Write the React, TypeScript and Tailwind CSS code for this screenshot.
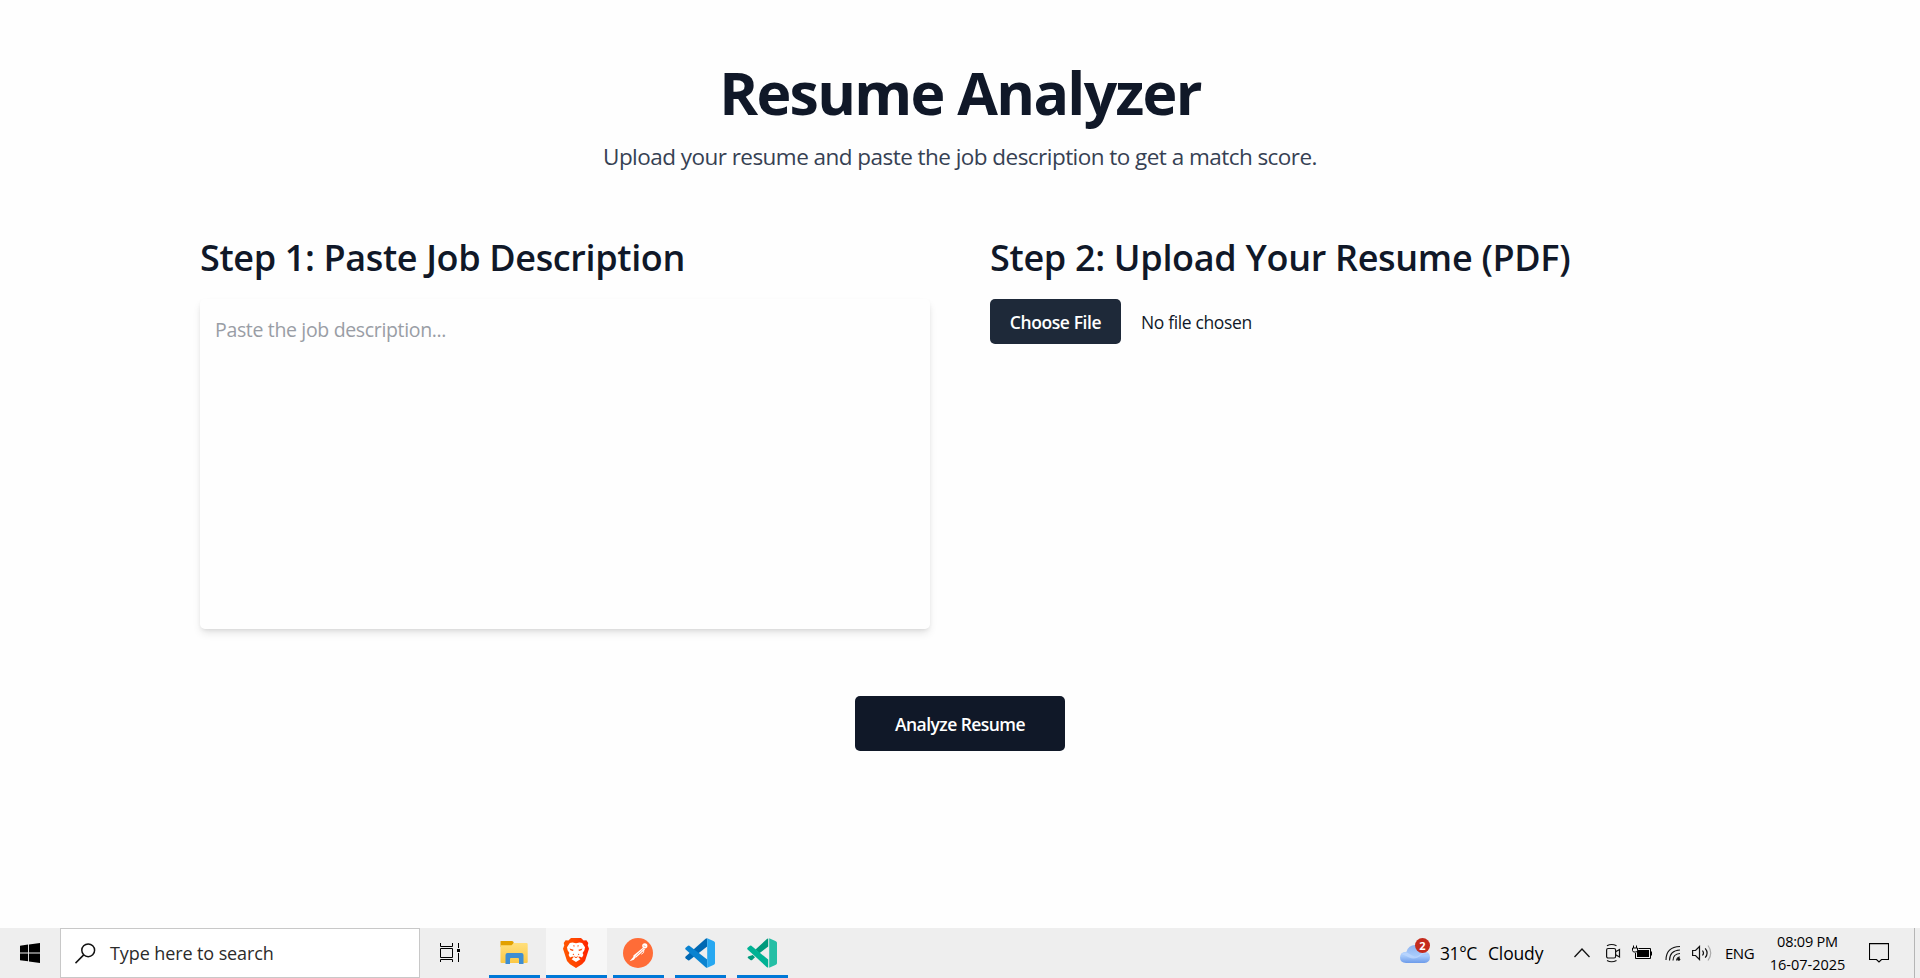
import type { ReactNode } from 'react';

function StartIcon() {
  return (
    <svg className="h-5 w-5" viewBox="0 0 20 20" fill="#000">
      <path d="M0 2.8 8.1 1.6V9.4H0zM9 1.5 20 0V9.4H9zM0 10.4H8.1V18.3L0 17.2zM9 10.4H20V20L9 18.5z" />
    </svg>
  );
}

function SearchIcon() {
  return (
    <svg className="h-[21px] w-[21px]" viewBox="0 0 21 21" fill="none" stroke="#111" strokeWidth="1.5">
      <circle cx="13.2" cy="7.3" r="6.4" />
      <path d="M8.7 11.9.5 20.1" />
    </svg>
  );
}

function TaskViewIcon() {
  return (
    <svg className="h-5 w-5" viewBox="0 0 20 20" fill="none" stroke="#000" strokeWidth="1">
      <path d="M.5 0V3.5H12.5V0M.5 5.5H12.5V14.5H.5zM.5 19V16.5H12.5V19M18.5 0V5M18.5 10V19" />
      <rect x="17" y="6" width="3" height="3" fill="#000" stroke="none" />
    </svg>
  );
}

function FolderIcon() {
  return (
    <svg className="h-[30px] w-[30px]" viewBox="0 0 30 30">
      <defs>
        <linearGradient id="folder" x1="0" y1="0" x2="0" y2="1">
          <stop offset="0" stopColor="#ffdf7c" />
          <stop offset="1" stopColor="#fbc845" />
        </linearGradient>
      </defs>
      <path d="M1.5 3.6Q1.5 3 2.2 3H13Q14.6 3 14.6 4.6V9H1.5z" fill="#e2a100" />
      <path d="M1.500 7.300H12.500L14.800 5H27.600Q28.700 5 28.700 6.200V24Q28.700 25 27.600 25H2.600Q1.500 25 1.500 24z" fill="url(#folder)" />
      <path d="M6.500 26V17Q6.500 15 8.500 15H22.500Q24.500 15 24.500 17V26H20V21Q20 20 19 20H12Q11 20 11 21V26z" fill="#3d8ed3" />
    </svg>
  );
}

function BraveIcon() {
  return (
    <svg className="h-[30px] w-[30px]" viewBox="0 0 30 30">
      <defs>
        <linearGradient id="brave" x1="0" y1="0" x2="1" y2="0">
          <stop offset="0" stopColor="#ff5601" />
          <stop offset=".5" stopColor="#ff4500" />
          <stop offset="1" stopColor="#ff2000" />
        </linearGradient>
      </defs>
      <path d="M10 0H20L22.6 2.6 25.4 2.3 27.3 5 26.7 7.2 28 10.7 24 23 21 26.3 15 30 9 26.3 6 23 2 10.7 3.3 7.2 2.7 5 4.6 2.3 7.4 2.6z" fill="url(#brave)" />
      <path d="M15 5.2 18.5 4.4 21.2 5 24 9.2 23.4 12.2 21.6 15 22.4 17 21 19.6 18.6 18.4 17.4 19.2 19.4 21.2 15 24 10.600 21.2 12.600 19.2 11.400 18.4 9 19.600 7.600 17 8.400 15 6.600 12.200 6 9.200 8.800 5 11.500 4.400z" fill="#fff" />
      <path d="M8.500 10.500 12.600 11.700 12 12.900 9.500 12.200zM21.500 10.500 17.400 11.700 18 12.900 20.500 12.200zM12.300 15.500 13.300 17.300 11.600 16.800zM17.700 15.500 16.700 17.300 18.400 16.800zM12.300 7 13.600 7.500 13 9.500zM17.700 7 16.400 7.500 17 9.500z" fill="#ff4500" />
      <path d="M12 18 15 19 18 18 15.400 19.900H14.600z" fill="#ff4500" />
    </svg>
  );
}

function PostmanIcon() {
  return (
    <svg className="h-[30px] w-[30px]" viewBox="0 0 30 30">
      <circle cx="15" cy="15" r="15" fill="#ff6c37" />
      <circle cx="21.8" cy="7.8" r="2.6" fill="#fff" />
      <path d="M20.2 9.5 22 11.4 13.2 19.6 10.5 19.5 10.4 17.6z" fill="#fff" />
      <path d="M11 18.2 6.6 23.2 10.8 21.8 12.6 19.6z" fill="#fff" />
      <path d="M12.5 18.2 20.7 10.7M20.5 7.8 22.5 8.5" stroke="#ff6c37" strokeWidth=".6" />
      <path d="M20.800 12.200Q21.600 15 18.200 16.300" stroke="#fff" strokeWidth=".9" fill="none" />
    </svg>
  );
}

function CodeIcon({ dark, mid, light }: { dark: string; mid: string; light: string }) {
  return (
    <svg className="h-[30px] w-[30px]" viewBox="0 0 30 30">
      <path d="M22.2.2V8.4L4.4 22.2Q3.5 22.8 2.7 22.1L.6 20.2Q-.2 19.3.6 18.5L20.6.8Q21.4.1 22.2.2z" fill={dark} />
      <path d="M22.2 29.8V21.6L4.4 7.8Q3.5 7.2 2.7 7.9L.6 9.8Q-.2 10.7.6 11.5L20.6 29.2Q21.4 29.9 22.2 29.8z" fill={mid} />
      <path d="M22.2.2 28.9 3.2Q30 3.8 30 5V25Q30 26.2 28.9 26.8L22.2 29.8z" fill={light} />
    </svg>
  );
}

function InsidersIcon() {
  return (
    <svg className="h-[30px] w-[30px]" viewBox="0 0 30 30">
      <path d="M21.2.5V8.4L12.4 15.3 8.5 11.6 19.6 1.2Q20.4.4 21.2.5zM5.8 16.9 8 19.3 5.2 22Q4.3 22.7 3.4 22L1.2 20.3Q.2 19.4 1.2 18.5z" fill="#009a7c" />
      <path d="M21.2 29.5V21.6L4.4 7.8Q3.5 7.2 2.7 7.9L.6 9.8Q-.2 10.7.6 11.5L19.6 28.9Q20.4 29.6 21.2 29.5z" fill="#00b294" />
      <path d="M22.2.2 28.9 3.2Q30 3.8 30 5V25Q30 26.2 28.9 26.8L22.2 29.8z" fill="#24bfa5" />
    </svg>
  );
}

function CloudIcon() {
  return (
    <svg className="h-[20px] w-[30px]" viewBox="0 0 30 20">
      <defs>
        <linearGradient id="cloud" x1="0" y1="0" x2="0" y2="1">
          <stop offset="0" stopColor="#8fb4f0" />
          <stop offset=".6" stopColor="#a8cbfb" />
          <stop offset="1" stopColor="#6d9bea" />
        </linearGradient>
      </defs>
      <path d="M6 20Q0 19.500 0 14.500 0 9 6.500 8.700 8.500 2 15 2 21.500 2 23.300 8.500 30 8.800 30 14.300 29.800 19.600 24.500 20z" fill="url(#cloud)" />
      <path d="M1 11.500Q3 8.600 7 9.500L12 12.500Q17 15 20 11.500 24 7.500 28 10.800 22 10 19.500 13.500 15 17 9 14.500 4 11.500 1 11.500z" fill="#bdd8ff" opacity=".75" />
    </svg>
  );
}

function AppButton({ children, active }: { children: ReactNode; active?: boolean }) {
  return (
    <div className={active ? 'flex h-full w-[61px] flex-col items-center bg-[#f7f7f7]' : 'flex h-full w-[51px] flex-col items-center'}>
      <div className="flex h-[47px] items-start justify-center pr-[2px] pt-2.5">{children}</div>
      <div className="h-[3px] w-full bg-[#0078d7]" />
    </div>
  );
}

function Taskbar() {
  return (
    <footer className="flex h-[50px] w-full items-stretch bg-[#eeeeee] text-black">
      <div className="flex w-[60px] items-center justify-center">
        <StartIcon />
      </div>
      <div className="flex w-[360px] items-center border border-[#c8c8c8] bg-white pl-[14px]">
        <SearchIcon />
        <span className="pl-[14px] text-[18px] tracking-[-0.1px] text-[#2b2b2b]">Type here to search</span>
      </div>
      <div className="flex w-[69px] items-center pl-5">
        <TaskViewIcon />
      </div>
      <AppButton><FolderIcon /></AppButton>
      <div className="w-1.5" />
      <AppButton active><BraveIcon /></AppButton>
      <div className="w-1.5" />
      <AppButton><PostmanIcon /></AppButton>
      <div className="w-[11px]" />
      <AppButton><CodeIcon dark="#0068b3" mid="#0a83d0" light="#27a8f1" /></AppButton>
      <div className="w-[11px]" />
      <AppButton><InsidersIcon /></AppButton>

      <div className="ml-auto flex items-center">
        <div className="relative flex h-full w-10 items-start pt-[15px]">
          <CloudIcon />
          <span className="absolute left-[15px] top-2.5 flex h-[15px] w-[15px] items-center justify-center rounded-full bg-[#c42b1c] text-[11px] font-bold leading-none text-white">2</span>
        </div>
        <span className="w-[48px] whitespace-nowrap text-[17.5px] tracking-[-0.4px]">31°C</span>
        <span className="w-[86px] whitespace-nowrap text-[17.5px] tracking-[-0.15px]">Cloudy</span>
        <svg className="h-5 w-[31px]" viewBox="0 0 31 20" fill="none" stroke="#111" strokeWidth="1.3">
          <path d="M.5 14 8 6 15.5 14" />
        </svg>
        <svg className="h-5 w-[27px]" viewBox="0 0 27 20" fill="none" stroke="#111" strokeWidth="1.2">
          <rect x="1.6" y="5.5" width="9" height="9.5" rx="1.5" />
          <path d="M10.6 8.8 14.5 6.5V14L10.6 11.7M2 2.8Q6.5.2 11.5 2.8M2 17.5Q6.5 20 11.5 17.5" />
        </svg>
        <svg className="h-5 w-[33px]" viewBox="0 0 33 20" fill="none" stroke="#000" strokeWidth="1">
          <path d="M6.5 5.5H18.5V15.5H3.5V10" />
          <rect x="5" y="7" width="12" height="7" fill="#000" stroke="none" />
          <path d="M19.5 8.500V12.500M1.500 2.500V5M4.500 2.500V5" />
          <path d="M.5 5H5.500V7.500L4.500 9H1.500L.5 7.500z" fill="#eee" />
        </svg>
        <svg className="h-5 w-[27px]" viewBox="0 0 27 20" fill="none" stroke="#111" strokeWidth="1.1">
          <path d="M1 17Q1 4 15 3.5M4.500 17.500Q4.500 7.500 15 7M8 17.500Q8 11 15 10.500M11.500 17.500Q12 14 15 14" />
          <circle cx="13.700" cy="16.200" r="1.500" fill="#111" stroke="none" />
        </svg>
        <svg className="h-5 w-[33px]" viewBox="0 0 33 20" fill="none" stroke="#111" strokeWidth="1.2">
          <path d="M.6 7.500H3.500L7.500 3.500V16.500L3.500 12.500H.6zM10.500 7.500Q12.500 10 10.500 12.500M13.200 5.300Q17 10 13.200 14.700" />
          <path d="M16 2.500Q21.500 10 16 17.500" stroke="#aaa" />
        </svg>
        <span className="w-[45px] text-[15px] tracking-[-0.5px]">ENG</span>
        <div className="flex w-[75px] flex-col items-center whitespace-nowrap text-[14.5px] leading-[23px]">
          <span className="tracking-[-0.2px]">08:09 PM</span>
          <span>16-07-2025</span>
        </div>
        <svg className="ml-6 h-5 w-5" viewBox="0 0 20 20" fill="none" stroke="#000" strokeWidth="1.1">
          <path d="M.5.6H19.500V16.500H12.500L10 19 7.500 16.500H.5z" />
        </svg>
        <div className="ml-[25px] mr-[5px] h-[50px] w-px bg-[#b5b5b5]" />
      </div>
    </footer>
  );
}

export default function App() {
  return (
    <div className="flex h-[978px] w-full flex-col overflow-hidden bg-[#fefefe] font-['Open_Sans','Noto_Sans',sans-serif] text-[#101828]">
      <main className="flex flex-1 flex-col items-center pt-[62px]">
        <h1 className="text-[59px] font-bold leading-[60px] tracking-[-1.7px]">Resume Analyzer</h1>
        <p className="mt-[19px] text-[22.5px] leading-8 tracking-[-0.54px] text-[#364153]">
          Upload your resume and paste the job description to get a match score.
        </p>
        <div className="mt-[65px] grid w-[1520px] grid-cols-2 gap-[60px]">
          <section>
            <h2 className="text-[36px] font-semibold leading-10 tracking-[-0.36px]">Step 1: Paste Job Description</h2>
            <textarea
              className="mt-[21px] block h-[330px] w-full resize-none rounded-[5px] bg-[#fefefe] p-[15px] pt-[17px] text-[19.5px] leading-7 tracking-[-0.34px] shadow-[0_5px_8px_-1px_rgba(0,0,0,0.1),0_2px_5px_-2px_rgba(0,0,0,0.12)] outline-none placeholder:text-[#999da5]"
              placeholder="Paste the job description..."
            />
          </section>
          <section>
            <h2 className="text-[36px] font-semibold leading-10 tracking-[-0.31px]">Step 2: Upload Your Resume (PDF)</h2>
            <div className="mt-[21px] flex items-center gap-5">
              <button className="h-[45px] w-[131px] rounded-[5px] bg-[#1e2939] pt-0.5 text-[17.5px] font-semibold tracking-[-0.4px] text-white">Choose File</button>
              <span className="pt-0.5 text-[17.5px] tracking-[-0.36px]">No file chosen</span>
            </div>
          </section>
        </div>
        <button className="mt-[67px] h-[55px] w-[210px] rounded-[5px] bg-[#101828] pt-0.5 text-[17.5px] font-semibold tracking-[-0.55px] text-white">
          Analyze Resume
        </button>
      </main>
      <Taskbar />
    </div>
  );
}
